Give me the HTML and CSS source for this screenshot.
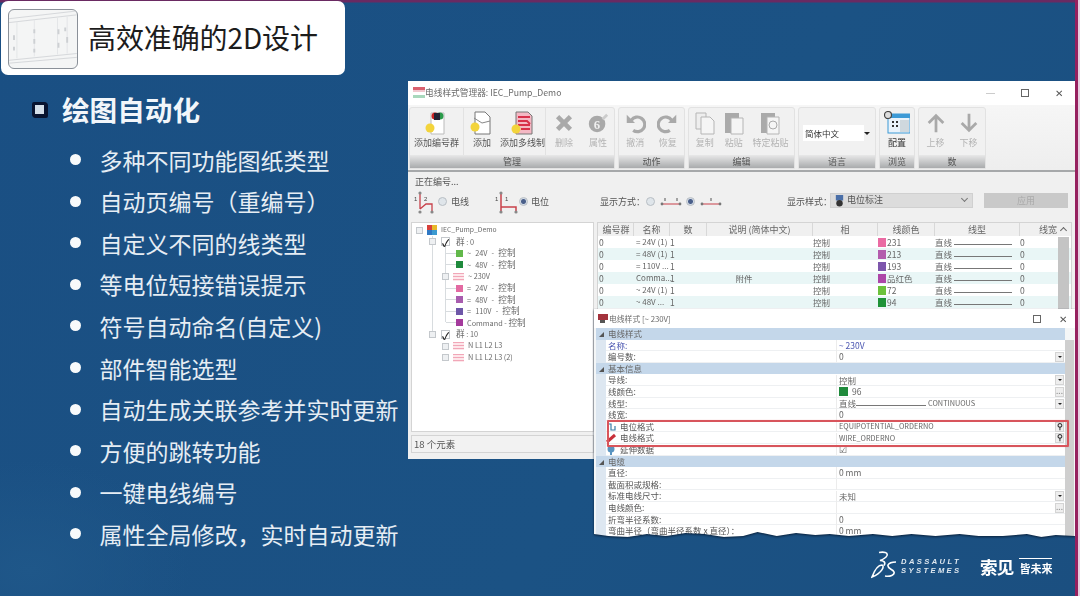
FILE: index.html
```html
<!DOCTYPE html>
<html lang="zh">
<head>
<meta charset="utf-8">
<title>高效准确的2D设计</title>
<link rel="stylesheet" href="styles.css">
</head>
<body>
<div class="slide">
  <header class="banner">
    <div class="thumb">
      <svg viewBox="0 0 70 60" width="68" height="58">
        <path d="M0 9 L70 1 M0 13 L70 5 M0 52 L70 45 M0 55 L70 49" stroke="#d4d7da" fill="none"/>
        <path d="M8 12V50 M26 10V48 M50 8V46 M60 7V45" stroke="#e3e5e7" fill="none"/>
        <path d="M26 20v4 M26 30v5 M26 40v4 M51 20v5 M58 18v4 M60 28v6 M51 34v5 M5 26v5 M5 38v4" stroke="#cdd0d3" stroke-width="2" fill="none"/>
      </svg>
    </div>
    <h1 class="banner-title">高效准确的2D设计</h1>
  </header>
  <section class="content">
    <h2 class="heading"><span class="check-bullet"></span>绘图自动化</h2>
    <ul class="points">
      <li>多种不同功能图纸类型</li>
      <li>自动页编号（重编号）</li>
      <li>自定义不同的线类型</li>
      <li>等电位短接错误提示</li>
      <li>符号自动命名(自定义)</li>
      <li>部件智能选型</li>
      <li>自动生成关联参考并实时更新</li>
      <li>方便的跳转功能</li>
      <li>一键电线编号</li>
      <li>属性全局修改，实时自动更新</li>
    </ul>
  </section>

  <div class="win main-win">
    <div class="titlebar">
      <svg class="t-icon" viewBox="0 0 12 12" width="12" height="12"><rect y="0" width="12" height="3" fill="#d9606e"/><rect y="3" width="12" height="2" fill="#f2c8cf"/><rect y="6" width="12" height="2" fill="#fff"/><rect y="8" width="12" height="3" fill="#a8d8bc"/></svg>
      <span class="t-text">电线样式管理器: IEC_Pump_Demo</span>
      <span class="controls">
        <i class="c-min"></i><i class="c-max"></i><span class="c-close">✕</span>
      </span>
    </div>
    <div class="ribbon">
      <div class="group g-manage">
        <div class="btns">
          <div class="btn b-47 sep">
            <svg viewBox="0 0 24 24" width="24" height="24"><path d="M6 2h13v21H6z" fill="#fff" stroke="#bbb"/><circle cx="10" cy="5" r="3.5" fill="#c22"/><circle cx="15" cy="5" r="3.5" fill="#2a9a4a"/><rect x="9" y="2" width="6" height="7" fill="#223"/><circle cx="5" cy="17" r="4.5" fill="#f3d43c"/></svg>
            <span>添加编号群</span>
          </div>
          <div class="btn b-38">
            <svg viewBox="0 0 24 24" width="24" height="24"><path d="M5 1h10l5 5v17H5z" fill="#fff" stroke="#777"/><path d="M4 7l8 5 8-2" fill="none" stroke="#888"/><circle cx="5" cy="16" r="4.5" fill="#f3d43c"/></svg>
            <span>添加</span>
          </div>
          <div class="btn b-46 sep">
            <svg viewBox="0 0 24 24" width="24" height="24"><path d="M5 1h12l4 4v18H5z" fill="#f4b8c4" stroke="#777"/><path d="M7 6h12M7 10h9l3 3M7 14h12M10 18h9" stroke="#d8304a" stroke-width="2" fill="none"/><circle cx="5" cy="18" r="4.5" fill="#f3d43c"/></svg>
            <span>添加多线制</span>
          </div>
          <div class="btn b-34 off">
            <svg viewBox="0 0 24 24" width="22" height="22"><path d="M5 5l14 14M19 5L5 19" stroke="#a9a9a9" stroke-width="5"/></svg>
            <span>删除</span>
          </div>
          <div class="btn b-30 off">
            <svg viewBox="0 0 24 24" width="22" height="22"><circle cx="11" cy="13" r="9" fill="#a9a9a9"/><text x="11" y="18" font-size="14" font-weight="700" text-anchor="middle" fill="#eee" font-family="Liberation Serif">6</text><path d="M17 8l5-5" stroke="#ccc" stroke-width="3"/></svg>
            <span>属性</span>
          </div>
        </div>
        <div class="g-label">管理</div>
      </div>
      <div class="group g-action">
        <div class="btns">
          <div class="btn b-33 off">
            <svg viewBox="0 0 24 24" width="22" height="22"><path d="M8 9a8 8 0 1 1 2 11" fill="none" stroke="#a9a9a9" stroke-width="3.5"/><path d="M3 3v9h9z" fill="#a9a9a9"/></svg>
            <span>撤消</span>
          </div>
          <div class="btn b-33 off">
            <svg viewBox="0 0 24 24" width="22" height="22"><path d="M16 9a8 8 0 1 0-2 11" fill="none" stroke="#a9a9a9" stroke-width="3.5"/><path d="M21 3v9h-9z" fill="#a9a9a9"/></svg>
            <span>恢复</span>
          </div>
        </div>
        <div class="g-label">动作</div>
      </div>
      <div class="group g-edit">
        <div class="btns">
          <div class="btn b-30 off">
            <svg viewBox="0 0 24 24" width="24" height="24"><path d="M3 2h10v16H3z" fill="#eee" stroke="#b5b5b5"/><path d="M8 6h9l4 4v13H8z" fill="#f5f5f5" stroke="#b5b5b5"/></svg>
            <span>复制</span>
          </div>
          <div class="btn b-27 off">
            <svg viewBox="0 0 24 24" width="24" height="24"><path d="M3 2h14v20H3z" fill="#aaa"/><path d="M9 7h12v16H9z" fill="#f5f5f5" stroke="#b5b5b5"/></svg>
            <span>粘贴</span>
          </div>
          <div class="btn b-48 off">
            <svg viewBox="0 0 24 24" width="24" height="24"><path d="M3 2h14v20H3z" fill="#aaa"/><path d="M9 6h12v17H9z" fill="#f5f5f5" stroke="#b5b5b5"/><circle cx="15" cy="14" r="4" fill="none" stroke="#aaa"/></svg>
            <span>特定粘贴</span>
          </div>
        </div>
        <div class="g-label">编辑</div>
      </div>
      <div class="group g-lang">
        <div class="btns lang-body">
          <div class="lang-field"><span>简体中文</span><b class="caret"></b></div>
        </div>
        <div class="g-label">语言</div>
      </div>
      <div class="group g-browse">
        <div class="btns">
          <div class="btn b-35">
            <svg viewBox="0 0 26 24" width="26" height="24"><rect x="4" y="3" width="22" height="19" fill="#eaf3fb" stroke="#3d9ad6"/><rect x="4" y="3" width="22" height="4" fill="#3d9ad6"/><rect x="16" y="9" width="9" height="12" fill="#cfd8de"/><path d="M8 11h2M12 11h2M8 15h2M12 15h2" stroke="#333" stroke-width="2"/><circle cx="4" cy="4" r="3.5" fill="#ddd" stroke="#444" stroke-width="1.2"/></svg>
            <span class="dark">配置</span>
          </div>
        </div>
        <div class="g-label">浏览</div>
      </div>
      <div class="group g-num">
        <div class="btns">
          <div class="btn b-33 off">
            <svg viewBox="0 0 24 24" width="22" height="22"><path d="M12 22V5M4 12l8-8 8 8" fill="none" stroke="#a9a9a9" stroke-width="3"/></svg>
            <span>上移</span>
          </div>
          <div class="btn b-33 off">
            <svg viewBox="0 0 24 24" width="22" height="22"><path d="M12 2v17M4 12l8 8 8-8" fill="none" stroke="#a9a9a9" stroke-width="3"/></svg>
            <span>下移</span>
          </div>
        </div>
        <div class="g-label">数</div>
      </div>
    </div>
    <div class="options">
      <div class="opt-title">正在编号...</div>
      <div class="opt-row">
        <svg class="o-wire" viewBox="0 0 24 24" width="24" height="24"><path d="M7 3v16M7 19l6-5h6v7" fill="none" stroke="#c8404a" stroke-width="1.3"/><circle cx="7" cy="3" r="1.6" fill="#888"/><circle cx="7" cy="22" r="1.6" fill="#888"/><circle cx="19" cy="22" r="1.6" fill="#888"/><text x="1" y="11" font-size="6" fill="#444" font-family="Liberation Sans">1</text><text x="11" y="11" font-size="6" fill="#444" font-family="Liberation Sans">2</text></svg>
        <i class="radio r-a"></i><span class="o-wire-lbl">电线</span>
        <svg class="o-wire" viewBox="0 0 24 24" width="24" height="24"><path d="M7 3v19M7 17h15v5" fill="none" stroke="#c8404a" stroke-width="1.5"/><circle cx="7" cy="3" r="1.6" fill="#888"/><circle cx="7" cy="22" r="1.6" fill="#888"/><circle cx="22" cy="22" r="1.6" fill="#888"/><text x="1" y="11" font-size="6" fill="#444" font-family="Liberation Sans">1</text><text x="11" y="11" font-size="6" fill="#444" font-family="Liberation Sans">1</text></svg>
        <i class="radio on r-b"></i><span class="o-pot-lbl">电位</span>
        <span class="o-show">显示方式：</span>
        <i class="radio"></i>
        <svg class="o-line" viewBox="0 0 22 10" width="22" height="10"><path d="M2 7h18" stroke="#c8404a"/><circle cx="2" cy="7" r="1.4" fill="#777"/><circle cx="20" cy="7" r="1.4" fill="#777"/><path d="M5 1v3M17 1v3" stroke="#555"/></svg>
        <i class="radio on"></i>
        <svg class="o-line" viewBox="0 0 22 10" width="22" height="10"><path d="M2 7h18" stroke="#c8404a"/><circle cx="2" cy="7" r="1.4" fill="#777"/><circle cx="20" cy="7" r="1.4" fill="#777"/><path d="M11 1v3" stroke="#555"/></svg>
        <span class="o-style">显示样式：</span>
        <div class="style-combo">
          <svg viewBox="0 0 12 14" width="11" height="13"><path d="M2 1h8v6H2z" fill="#4a6fa8"/><circle cx="6" cy="10" r="3.5" fill="#333"/></svg>
          <span>电位标注</span><b class="chev"></b>
        </div>
        <div class="apply">应用</div>
      </div>
    </div>
    <div class="split">
      <div class="left-pane">
        <div class="tree">
          <div class="node n0"><i class="box"></i><svg viewBox="0 0 10 10" width="10" height="10"><rect width="5" height="5" fill="#d8403a"/><rect x="5" width="5" height="5" fill="#e8b82a"/><rect y="5" width="5" height="5" fill="#2f78c4"/><rect x="5" y="5" width="5" height="5" fill="#3b9ad0"/></svg><span>IEC_Pump_Demo</span></div>
          <div class="node n1"><i class="box"></i><b class="chk">✓</b><span><span class="cj">群</span> : 0</span></div>
          <div class="node n2"><u class="sw s1"></u><span>~ 24V - <span class="cj">控制</span></span></div>
          <div class="node n2"><u class="sw s2"></u><span>~ 48V - <span class="cj">控制</span></span></div>
          <div class="node n1b"><i class="box"></i><u class="wave"></u><span>~ 230V</span></div>
          <div class="node n2"><u class="sw s3"></u><span>= 24V - <span class="cj">控制</span></span></div>
          <div class="node n2"><u class="sw s4"></u><span>= 48V - <span class="cj">控制</span></span></div>
          <div class="node n2"><u class="sw s5"></u><span>= 110V - <span class="cj">控制</span></span></div>
          <div class="node n2 cmd"><u class="sw s6"></u><span>Command - <span class="cj">控制</span></span></div>
          <div class="node n1"><i class="box"></i><b class="chk">✓</b><span><span class="cj">群</span> : 10</span></div>
          <div class="node n1b"><i class="box"></i><u class="wave"></u><span>N L1 L2 L3</span></div>
          <div class="node n1b"><i class="box"></i><u class="wave"></u><span>N L1 L2 L3 (2)</span></div>
        </div>
        <div class="status">18 个元素</div>
      </div>
      <div class="grid">
        <div class="row head"><span>编号群</span><span>名称</span><span>数</span><span>说明 (简体中文)</span><span>相</span><span>线颜色</span><span>线型</span><span class="r">线宽</span></div>
        <div class="row"><span>0</span><span class="c">= 24V (1)</span><span>1</span><span></span><span>控制</span><span class="col"><u class="sw c1"></u>231</span><span class="lt">直线<em></em></span><span>0</span></div>
        <div class="row alt"><span>0</span><span class="c">= 48V (1)</span><span>1</span><span></span><span>控制</span><span class="col"><u class="sw c2"></u>213</span><span class="lt">直线<em></em></span><span>0</span></div>
        <div class="row"><span>0</span><span class="c">= 110V ...</span><span>1</span><span></span><span>控制</span><span class="col"><u class="sw c3"></u>193</span><span class="lt">直线<em></em></span><span>0</span></div>
        <div class="row alt"><span>0</span><span class="c">Comma...</span><span>1</span><span class="ctr">附件</span><span>控制</span><span class="col"><u class="sw c4"></u>品红色</span><span class="lt">直线<em></em></span><span>0</span></div>
        <div class="row"><span>0</span><span class="c">~ 24V (1)</span><span>1</span><span></span><span>控制</span><span class="col"><u class="sw c5"></u>72</span><span class="lt">直线<em></em></span><span>0</span></div>
        <div class="row alt"><span>0</span><span class="c">~ 48V ...</span><span>1</span><span></span><span>控制</span><span class="col"><u class="sw c6"></u>94</span><span class="lt">直线<em></em></span><span>0</span></div>
        <b class="grid-up"></b>
        <div class="grid-scroll"></div>
      </div>
    </div>
  </div>

  <div class="win2-shadow">
    <div class="win prop-win">
      <div class="titlebar small">
        <svg viewBox="0 0 10 10" width="10" height="10"><rect width="10" height="6" fill="#a3323c"/><rect x="2" y="6" width="5" height="3" fill="#555"/></svg>
        <span class="t-text">电线样式 [~ 230V]</span>
        <span class="controls"><i class="c-max"></i><span class="c-close">✕</span></span>
      </div>
      <div class="props">
        <div class="p sec"><span>电线样式</span></div>
        <div class="p"><span class="blue">名称:</span><span class="blue">~ 230V</span></div>
        <div class="p"><span>编号数:</span><span>0</span><b class="pick arrow"></b></div>
        <div class="p sec"><span>基本信息</span></div>
        <div class="p"><span>导线:</span><span>控制</span><b class="pick arrow"></b></div>
        <div class="p"><span>线颜色:</span><span class="v-col"><u class="sw s2"></u>96</span><b class="pick">...</b></div>
        <div class="p"><span>线型:</span><span class="v-line">直线<em></em><span class="latin">CONTINUOUS</span></span><b class="pick arrow"></b></div>
        <div class="p"><span>线宽:</span><span>0</span></div>
        <div class="p"><span class="ico"><svg viewBox="0 0 10 10" width="10" height="10"><path d="M2 9V2h3v6h4V4" fill="none" stroke="#3a7fa8" stroke-width="1.2"/></svg>电位格式</span><span class="latin">EQUIPOTENTIAL_ORDERNO</span><b class="pick key">⚲</b></div>
        <div class="p"><span class="ico"><svg viewBox="0 0 10 10" width="10" height="10"><path d="M1 9l8-7" stroke="#c8303a" stroke-width="3"/></svg>电线格式</span><span class="latin">WIRE_ORDERNO</span><b class="pick key">⚲</b></div>
        <div class="p"><span class="ico"><svg viewBox="0 0 10 10" width="10" height="10"><circle cx="5" cy="4" r="3.5" fill="#5a94c0"/><path d="M5 4v6" stroke="#5a94c0" stroke-width="2"/></svg>延伸数据</span><span>☑</span></div>
        <div class="p sec"><span>电缆</span></div>
        <div class="p"><span>直径:</span><span>0 mm</span></div>
        <div class="p"><span>截面积或规格:</span><span></span></div>
        <div class="p"><span>标准电线尺寸:</span><span>未知</span><b class="pick arrow"></b></div>
        <div class="p"><span>电线颜色:</span><span></span><b class="pick">...</b></div>
        <div class="p"><span>折弯半径系数:</span><span>0</span></div>
        <div class="p"><span>弯曲半径（弯曲半径系数 x 直径）：</span><span>0 mm</span></div>
      </div>
      <div class="prop-scroll"></div>
    </div>
  </div>
  <div class="redbox"></div>

  <div class="logos">
    <svg class="ds" viewBox="0 0 26 28" width="26" height="28"><path d="M8 1.500c5-1 9 0 8 3-1 2-4 4-7 5 4 0 6 2 4 5M1 26c3-8 7-12 10-12 3 1 0 8-10 12zM14 25c5 1 10-1 9-4-1-3-7-3-6-7 1-2 4-3 8-3" fill="none" stroke="#fff" stroke-width="1.6"/></svg>
    <div class="ds-name"><span>DASSAULT</span><span>SYSTEMES</span></div>
    <div class="cn-mark">索见</div>
    <div class="cn-sub"><i></i><span>皆未来</span></div>
  </div>
  <div class="edge"></div>
</div>
</body>
</html>
```
FILE: styles.css
```css
* { box-sizing: border-box; margin: 0; padding: 0; }
html, body { width: 1080px; height: 596px; overflow: hidden; }
body { font-family: "Noto Sans CJK SC", "Noto Sans", sans-serif; background: #1b5082; }
u, em, i, b { text-decoration: none; font-style: normal; display: inline-block; }

.slide {
  position: relative; width: 1080px; height: 596px; overflow: hidden;
  padding: 1px 0 0 1px;
  background:
    linear-gradient(180deg, #6a2a62 0, #6a2a62 2px, transparent 3px),
    radial-gradient(ellipse 160px 110px at 30px 570px, #1f5789 0, transparent 100%),
    linear-gradient(120deg, #1a4f83, #1b5284 60%, #1b4f80);
}

.banner {
  display: flex; align-items: center; gap: 10px;
  width: 344px; height: 74px; padding: 8px 0 6px 7px;
  background: #fff; border-radius: 7px;
}
.thumb { width: 70px; height: 60px; border: 1px solid #8a9098; border-radius: 6px; background: #f4f5f5; overflow: hidden; flex: none; }
.banner-title { font-size: 28px; font-weight: 400; color: #1c1c1c; line-height: 1; margin-top: -4px; letter-spacing: -.1px; }

.content { padding: 14px 0 0 31px; width: 400px; color: #fff; }
.heading { display: flex; align-items: center; gap: 15px; font-size: 27.6px; font-weight: 700; line-height: 40px; color: #f2f6fa; }
.check-bullet { width: 15px; height: 15px; background: #d4dfe9; border: 3px solid #081430; border-radius: 2px; box-shadow: 1px 1px 0 #081430; }
.points { list-style: none; margin-top: 10px; padding-left: 37px; }
.points li { display: flex; align-items: center; gap: 18.5px; height: 41.55px; font-size: 23px; color: #e6edf4; white-space: nowrap; }
.points li::before { content: ""; width: 11px; height: 11px; border-radius: 50%; background: #f8fafb; flex: none; margin-left: 1px; }

.win { position: absolute; background: #f0f0f0; color: #555; font-size: 8.5px; line-height: 11.5px; filter: blur(.35px); }
.main-win { left: 408px; top: 81px; width: 667px; height: 378px; overflow: hidden; }

.titlebar { display: flex; align-items: center; height: 24px; background: #fff; padding: 0 12px 0 5px; gap: 0; }
.t-icon { margin-right: 0; }
.t-text { font-size: 8.7px; color: #6a6a6a; }
.controls { margin-left: auto; display: flex; align-items: center; gap: 26px; }
.c-min { width: 9px; height: 1px; background: #ccc; }
.c-max { width: 8px; height: 8px; border: 1px solid #666; }
.c-close { font-size: 10px; color: #555; }

.ribbon { display: flex; gap: 3px; height: 67px; padding: 2px 0 0 1px; background: linear-gradient(180deg, #f6f6f6, #eee); border-bottom: 2px solid #a6a8aa; }
.group { display: flex; flex-direction: column; height: 62px; background: #f1f1f1; border: 1px solid #e2e2e2; border-radius: 3px 3px 0 0; }
.btns { flex: 1; display: flex; }
.g-label { height: 13px; line-height: 13px; text-align: center; color: #555; font-size: 9px; background: linear-gradient(180deg, #e8e8e8, #a9abad); }
.g-manage { width: 206px; }
.g-action { width: 67px; }
.g-edit { width: 107px; }
.g-lang { width: 78px; }
.g-browse { width: 36px; }
.g-num { width: 68px; }
.btn { display: flex; flex-direction: column; align-items: center; padding-top: 3px; gap: 2px; color: #555; font-size: 9px; white-space: nowrap; }
.btn svg { height: 24px; }
.btn.off { color: #b4b4b4; }
.btn .dark { color: #333; }
.sep { border-right: 1px solid #e2e2e2; }
.b-47 { width: 54px; } .b-38 { width: 36px; } .b-46 { width: 46px; }
.b-34 { width: 36px; } .b-30 { width: 32px; } .b-33 { width: 33px; }
.b-27 { width: 27px; } .b-48 { width: 48px; } .b-35 { width: 34px; }
.lang-body { padding: 17px 4px 0 4px; }
.lang-field { display: flex; align-items: center; justify-content: space-between; width: 70px; height: 16px; }
.lang-field span { background: #fff; width: 61px; height: 16px; line-height: 16px; padding-left: 2px; color: #333; }
.caret { border: 3px solid transparent; border-top: 3px solid #222; border-bottom: 0; margin-right: 1px; }

.options { height: 50px; padding: 3px 0 0 5px; background: #f0f0f0; }
.opt-title { font-size: 9px; height: 13px; line-height: 13px; color: #555; padding-left: 2px; }
.opt-row { display: flex; align-items: center; height: 27px; font-size: 9px; white-space: nowrap; }
.radio { width: 9px; height: 9px; border-radius: 50%; background: #dfe5ea; border: 1px solid #b8bec4; flex: none; }
.radio.on { background: radial-gradient(circle, #4a5f8a 0 2px, #d4dce6 3px); }
.o-wire { flex: none; }
.r-a { margin-left: 1px; }
.o-wire-lbl { margin-left: 4px; width: 43px; flex: none; }
.r-b { margin-left: 1px; }
.o-pot-lbl { margin-left: 3px; width: 69px; flex: none; }
.o-show { width: 46px; flex: none; }
.o-line { margin: 0 4px 0 5px; flex: none; }
.o-style { margin-left: 61px; width: 43px; flex: none; }
.style-combo { display: flex; align-items: center; gap: 2px; width: 143px; height: 15px; margin-top: -3px; background: #dcdcdc; border: 1px solid #d0d0d0; padding-left: 3px; flex: none; }
.chev { margin-left: auto; margin-right: 5px; width: 5px; height: 5px; border-right: 1px solid #777; border-bottom: 1px solid #777; transform: rotate(45deg); margin-top: -3px; }
.apply { margin-left: 11px; margin-top: -3px; width: 84px; height: 15px; line-height: 15px; background: #c9c9c9; color: #aaa; text-align: center; flex: none; }

.split { display: flex; gap: 3px; padding-left: 3px; }
.left-pane { width: 183px; flex: none; }
.tree { position: relative; height: 210px; background: #fff; border: 1px solid #d4d4d4; padding: 0 0 0 4px; color: #6a6a6a; font-size: 7.3px; }
.tree::before { content: ""; position: absolute; left: 20px; top: 13px; width: 1px; height: 97px; background: #d8dcdf; }
.tree::after { content: ""; position: absolute; left: 33px; top: 21px; width: 1px; height: 78px; background: #d8dcdf; }
.cj { font-size: 8.6px; }
.node { display: flex; align-items: center; height: 11.6px; gap: 4px; white-space: nowrap; position: relative; z-index: 1; }
.node.n0 { height: 12px; margin-top: 1px; font-size: 6.8px; }
.n1 { padding-left: 13px; }
.n1 .chk { margin-left: 1px; margin-right: 2px; }
.n1b { padding-left: 26px; }
.n2 { padding-left: 40px; word-spacing: 2.5px; }
.n2.cmd { word-spacing: 0; }
.n2::before { content: ""; position: absolute; left: 30px; width: 10px; height: 1px; background: #d8dcdf; }
.box { width: 7px; height: 7px; border: 1px solid #c4c8cc; background: #eef0f2; }
.chk { width: 9px; height: 9px; font-size: 10px; line-height: 9px; border: 1px solid #c4c8cc; background: #fff; color: #222; font-weight: 700; text-align: center; }
.wave { width: 11px; height: 8px; background: repeating-linear-gradient(180deg, #f1a7b8 0 1px, #fde6ea 1px 3px); }
.sw { width: 7px; height: 7px; flex: none; }
.s1 { background: #62b84a; } .s2 { background: #1f8a3c; } .s3 { background: #e36aa2; }
.s4 { background: #a85cae; } .s5 { background: #6e57a8; } .s6 { background: #a43a9c; }
.c1 { background: #ea6ba3; } .c2 { background: #b35cad; } .c3 { background: #7d56ac; }
.c4 { background: #ad46a8; } .c5 { background: #6cc23c; } .c6 { background: #1f9238; }
.status { margin-top: 3px; height: 18px; line-height: 16px; padding-left: 2px; border: 1px solid #d4d4d4; background: #f2f2f2; font-size: 9.5px; }

.grid { position: relative; width: 475px; height: 90px; background: #fff; border: 1px solid #d4d4d4; overflow: hidden; color: #666; }
.row { display: grid; grid-template-columns: 35px 36px 37px 106px 65px 57px 85px 41px; height: 12px; line-height: 12px; white-space: nowrap; padding-left: 1px; }
.row.alt { background: #e9f6f6; }
.row.head { height: 13px; line-height: 13px; background: #f0f0f0; text-align: center; font-size: 9px; }
.head span { border-right: 1px solid #d8d8d8; }
.head .r { text-align: right; border: 0; padding-right: 4px; }
.row .c { padding-left: 2px; font-size: 8px; }
.row .ctr { text-align: center; padding-right: 32px; }
.col { display: flex; align-items: center; gap: 1px; }
.col .sw { width: 8px; height: 9px; }
.lt { display: flex; align-items: center; }
.lt em { width: 58px; height: 6px; border-bottom: 1px solid #777; margin-left: 2px; }
.grid-scroll { position: absolute; right: 2px; top: 14px; bottom: 0; width: 11px; background: #c4c4c4; }
.grid-up { position: absolute; right: 5px; top: 5px; width: 5px; height: 5px; border-left: 1px solid #666; border-top: 1px solid #666; transform: rotate(45deg); }

.win2-shadow { position: absolute; left: 594px; top: 309px; width: 482px; height: 232px; filter: drop-shadow(0 1px 1px rgba(5, 20, 40, .8)); }
.prop-win {
  left: 0; top: 0; width: 481px; height: 232px; background: #f4f6f7;
  clip-path: polygon(0 0, 100% 0, 100% 227px, 96% 226px, 93% 228px, 90% 225px, 85% 227px, 80% 227px, 76% 225px, 71% 227px, 66% 225px, 62% 227px, 58% 225px, 53% 227px, 49% 225px, 46% 226px, 42% 224px, 38% 227px, 34% 223px, 31% 227px, 27% 228px, 23% 225px, 19% 224px, 15% 227px, 11% 225px, 7% 228px, 3% 227px, 0 225px);
}
.titlebar.small { height: 19px; padding: 0 8px 0 4px; gap: 1px; }
.titlebar.small .t-text { font-size: 7.8px; }
.titlebar.small .controls { gap: 18px; }
.props { margin: 0 10px 0 2px; background: #fff; position: relative; }
.p { display: grid; grid-template-columns: 230px 1fr; align-items: center; height: 11.6px; padding-left: 12px; background: #fff; position: relative; white-space: nowrap; box-shadow: inset 10px 0 0 #dde7f1, inset 0 -1px 0 #eef0f2; }
.p.sec { background: #c4d7ea; box-shadow: none; color: #666; display: block; padding-left: 12px; }
.p.sec::before { content: "◢"; position: absolute; left: 3px; font-size: 5px; color: #555; }
.p > span:nth-child(2) { color: #666; border-left: 1px solid #ececec; margin-left: -2px; padding-left: 2px; height: 11px; line-height: 11px; }
.p .blue { color: #4a55b0 !important; }
.latin { font-size: 7.3px; }
.v-col, .ico { display: flex; align-items: center; gap: 4px; }
.ico { margin-left: -2px; }
.v-col .sw { width: 9px; height: 9px; }
.v-line { display: flex; align-items: center; }
.v-line em { width: 70px; height: 5px; border-bottom: 1px solid #777; margin-right: 2px; }
.pick { position: absolute; right: 1px; top: 1px; width: 9px; height: 10px; background: #eee; border: 1px solid #d4d4d4; font-size: 7px; line-height: 6px; text-align: center; color: #888; }
.pick.arrow::after { content: ""; display: block; margin: 3px auto 0; width: 0; border: 2px solid transparent; border-top: 2px solid #222; border-bottom: 0; }
.pick.key { color: #333; font-size: 8px; }
.prop-scroll { position: absolute; right: 1px; top: 31px; bottom: 0; width: 9px; background: #cfcfcf; }
.redbox { position: absolute; left: 607px; top: 420px; width: 462px; height: 27px; border: 2px solid #d8555c; border-radius: 1px; box-shadow: 0 0 1px rgba(216, 85, 92, .6); }

.logos { position: absolute; left: 871px; top: 551px; display: flex; align-items: flex-start; color: #fff; filter: blur(.3px); }
.ds { flex: none; }
.ds-name { display: flex; flex-direction: column; margin: 7px 0 0 4px; width: 79px; font: italic 700 7.6px/8.8px "Liberation Sans", sans-serif; letter-spacing: 2.4px; color: #dfe8f0; white-space: nowrap; }
.cn-mark { font-size: 17.5px; font-weight: 700; line-height: 20px; margin-top: 6px; letter-spacing: -.8px; }
.cn-sub { display: flex; flex-direction: column; margin: 7px 0 0 6px; font-size: 11px; font-weight: 700; line-height: 13px; }
.cn-sub i { height: 1px; width: 33px; background: #fff; margin-bottom: 3px; }
.edge { position: absolute; right: 0; top: 0; bottom: 0; width: 5px; background: linear-gradient(90deg, #96215f 0 3px, #e6cfe0 3px); }
```
